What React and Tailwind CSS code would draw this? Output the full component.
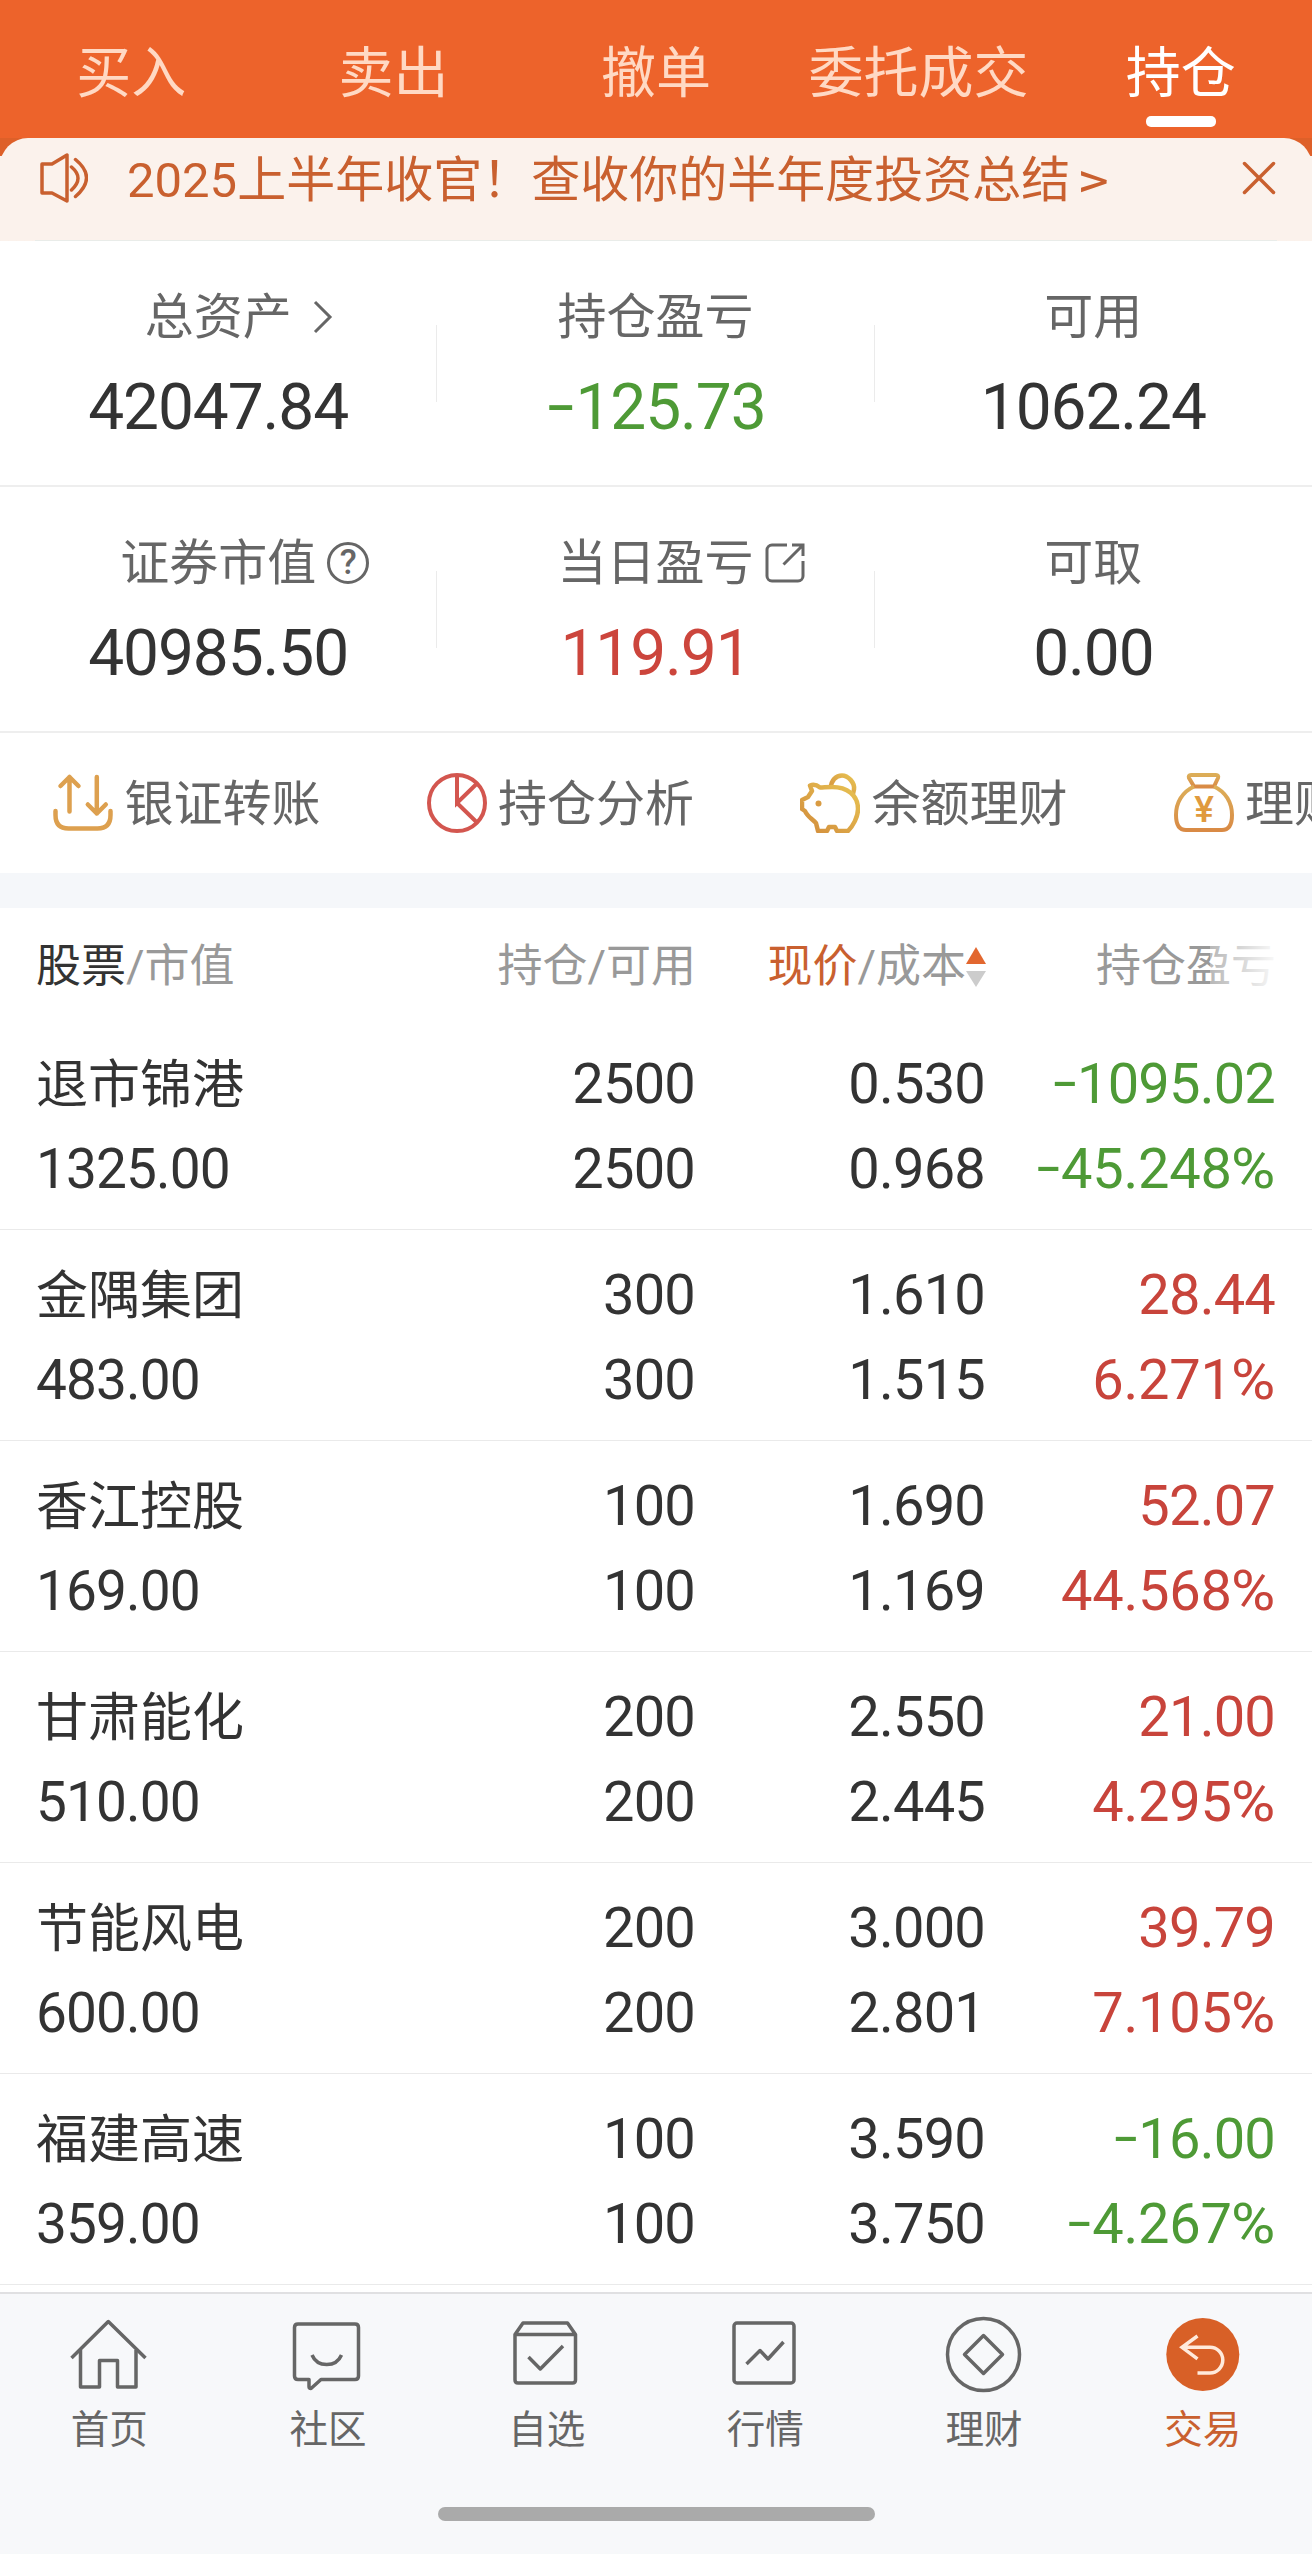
const tabs = ['买入', '卖出', '撤单', '委托成交', '持仓'];

const summary = [
  [
    { label: '总资产', value: '42047.84', icon: <ChevronIcon /> },
    { label: '持仓盈亏', value: '-125.73', tone: 'text-[#4e9a36]' },
    { label: '可用', value: '1062.24' },
  ],
  [
    { label: '证券市值', value: '40985.50', icon: <HelpIcon /> },
    { label: '当日盈亏', value: '119.91', tone: 'text-[#cc453c]', icon: <ExternalIcon /> },
    { label: '可取', value: '0.00' },
  ],
];

const holdings = [
  { name: '退市锦港', market: '1325.00', held: '2500', usable: '2500', price: '0.530', cost: '0.968', profit: '-1095.02', rate: '-45.248%' },
  { name: '金隅集团', market: '483.00', held: '300', usable: '300', price: '1.610', cost: '1.515', profit: '28.44', rate: '6.271%' },
  { name: '香江控股', market: '169.00', held: '100', usable: '100', price: '1.690', cost: '1.169', profit: '52.07', rate: '44.568%' },
  { name: '甘肃能化', market: '510.00', held: '200', usable: '200', price: '2.550', cost: '2.445', profit: '21.00', rate: '4.295%' },
  { name: '节能风电', market: '600.00', held: '200', usable: '200', price: '3.000', cost: '2.801', profit: '39.79', rate: '7.105%' },
  { name: '福建高速', market: '359.00', held: '100', usable: '100', price: '3.590', cost: '3.750', profit: '-16.00', rate: '-4.267%' },
];

const shortcuts = [
  { label: '银证转账', icon: <TransferIcon /> },
  { label: '持仓分析', icon: <PieIcon /> },
  { label: '余额理财', icon: <PiggyIcon /> },
  { label: '理财', icon: <MoneyBagIcon /> },
];

const navItems = [
  { label: '首页', icon: <HomeIcon /> },
  { label: '社区', icon: <ChatIcon /> },
  { label: '自选', icon: <PickIcon /> },
  { label: '行情', icon: <MarketIcon /> },
  { label: '理财', icon: <WealthIcon /> },
  { label: '交易', icon: <TradeIcon />, active: true },
];

export default function App() {
  return (
    <div className="flex h-[2554px] w-full flex-col overflow-hidden bg-white font-['Roboto','Noto_Sans_CJK_SC',sans-serif] text-[#333]">
      <TopTabs />
      <Notice />
      {summary.map((cells, i) => (
        <SummaryRow key={i} cells={cells} />
      ))}
      <Shortcuts />
      <div className="h-[35px] shrink-0 bg-[#f5f7fa]" />
      <TableHead />
      {holdings.map((h) => (
        <HoldingRow key={h.name} {...h} />
      ))}
      <BottomNav />
    </div>
  );
}

function TopTabs() {
  return (
    <nav className="grid h-[138px] shrink-0 grid-cols-5 bg-[#ed632b]">
      {tabs.map((tab) => {
        const active = tab === '持仓';
        return (
          <div
            key={tab}
            className={`flex flex-col items-center pt-[38px] text-[55px] leading-[70px] ${active ? 'text-white' : 'text-[#ffd9c4]'}`}
          >
            <span>{tab}</span>
            {active && <span className="mt-[8px] h-[11px] w-[70px] rounded-[5px] bg-white" />}
          </div>
        );
      })}
    </nav>
  );
}

function Notice() {
  return (
    <div className="h-[103px] shrink-0 bg-linear-to-b from-[#de6029] from-[18px] to-[#fbf2ec] to-[18px]">
      <div className="flex h-[102px] rounded-t-[28px] bg-[#fbf2ec] pt-[15px] pr-[36px] pl-[40px] text-[#c9602f]">
        <svg className="h-[50px] w-[48px]" viewBox="0 0 48 50" fill="none" stroke="currentColor" strokeWidth="3.500" strokeLinejoin="round" strokeLinecap="round">
          <path d="M2 11h10L27 2v46L12 40H2z" />
          <path d="M31.500 14q13 11 0 23M35.500 6.500q22 18 0 37" />
        </svg>
        <p className="mt-px ml-[39px] text-[49px] leading-[54px] whitespace-nowrap">
          2025上半年收官！查收你的半年度投资总结
          <span className="ml-[7px] inline-block origin-left scale-x-125">&gt;</span>
        </p>
        <svg className="mt-[8px] ml-auto h-[34px] w-[34px]" viewBox="0 0 34 34" stroke="currentColor" strokeWidth="3.500" strokeLinecap="round">
          <path d="M2.500 2.500l29 29M31.500 2.500l-29 29" />
        </svg>
      </div>
      <div className="mx-[35px] h-px bg-[#e9ece9]" />
    </div>
  );
}

// the sign and the percent mark take a wider cell than the font gives them
function Amount({ value }) {
  return (
    <>
      {value.startsWith('-') && (
        <span className="inline-block w-[0.47em] -translate-y-[0.03em] scale-x-150 text-center">-</span>
      )}
      {value.replace(/[-%]/g, '')}
      {value.endsWith('%') && (
        <span className="inline-block w-[0.77em] origin-right scale-x-108 text-right">%</span>
      )}
    </>
  );
}

function SummaryRow({ cells }) {
  return (
    <section className="grid h-[246px] shrink-0 grid-cols-3 border-b-2 border-[#eee]">
      {cells.map((cell, i) => (
        <div key={cell.label} className="flex">
          <div className="min-w-0 flex-1 pt-[38px]">
            <div className="grid h-[72px] grid-cols-[1fr_auto_1fr] items-center text-[49px] leading-[72px] text-[#666]">
              <span />
              <span className="pt-[3px]">{cell.label}</span>
              <span>{cell.icon}</span>
            </div>
            <div className={`mt-[17px] text-center text-[64px] leading-[80px] tracking-[-1.1px] ${cell.tone ?? ''}`}>
              <Amount value={cell.value} />
            </div>
          </div>
          {i < 2 && <div className="mt-[84px] h-[77px] w-px bg-[#ebebeb]" />}
        </div>
      ))}
    </section>
  );
}

function Shortcuts() {
  return (
    <section className="flex h-[140px] shrink-0 overflow-hidden pl-[53px]">
      {shortcuts.map((s) => (
        <div key={s.label} className="flex w-[373.500px] shrink-0 items-center gap-[11.500px] text-[49px] whitespace-nowrap text-[#666]">
          {s.icon}
          <span className="pt-[4px]">{s.label}</span>
        </div>
      ))}
    </section>
  );
}

function TableHead() {
  return (
    <div className="grid h-[111px] shrink-0 grid-cols-[360px_300px_290px_290px] px-[36px] pt-[27px] text-[45px] leading-[64px] whitespace-nowrap text-[#999]">
      <div>
        <span className="text-[#333]">股票</span>/市值
      </div>
      <div className="text-right">持仓/可用</div>
      <div className="flex h-[64px] items-center justify-end">
        <span>
          <span className="text-[#c9602f]">现价</span>/成本
        </span>
        <svg className="h-[40px] w-[20px]" viewBox="0 0 20 40">
          <path d="M10 0l10 17H0z" fill="#e2672f" />
          <path d="M0 24h20L10 40z" fill="#ccc" />
        </svg>
      </div>
      <div className="relative text-right">
        持仓盈亏
        <div className="absolute top-0 right-0 h-full w-[66px] bg-linear-to-r from-white/30 to-white/95" />
      </div>
    </div>
  );
}

function HoldingRow({ name, market, held, usable, price, cost, profit, rate }) {
  const tone = profit.startsWith('-') ? 'text-[#4e9a36]' : 'text-[#c8443b]';
  return (
    <div className="grid h-[211px] shrink-0 grid-cols-[360px_299px_290px_290px] border-b border-[#eaeaea] px-[36px] pt-[23px] text-right text-[56px] leading-[85px] tracking-[-0.8px] whitespace-nowrap">
      <div className="text-left">
        <div className="h-[85px] pt-px text-[52px] tracking-normal">{name}</div>
        <div className="text-[55px] tracking-[-0.9px]">{market}</div>
      </div>
      <div>
        <div>{held}</div>
        <div>{usable}</div>
      </div>
      <div>
        <div>{price}</div>
        <div>{cost}</div>
      </div>
      <div className={tone}>
        <div><Amount value={profit} /></div>
        <div className="tracking-[-0.2px]"><Amount value={rate} /></div>
      </div>
    </div>
  );
}

function BottomNav() {
  return (
    <footer className="mt-[7px] flex flex-1 flex-col items-center border-t-2 border-[#e0e0e2] bg-[#f7f8fa]">
      <div className="grid w-full grid-cols-6 pt-[21px]">
        {navItems.map((item, i) => (
          <div key={i} className={`flex flex-col items-center ${item.active ? 'text-[#c9602f]' : 'text-[#666]'}`}>
            {item.icon}
            <span className="mt-[9px] text-[38.500px] leading-[52px]">{item.label}</span>
          </div>
        ))}
      </div>
      <div className="mt-[51px] h-[14px] w-[437px] rounded-full bg-[#aaa]" />
    </footer>
  );
}

function ChevronIcon() {
  return (
    <svg className="ml-[21px] h-[34px] w-[20px]" viewBox="0 0 20 34" fill="none" stroke="currentColor" strokeWidth="3">
      <path d="M2 2l15 15L2 32" />
    </svg>
  );
}

function HelpIcon() {
  return (
    <span className="ml-[11px] flex h-[42px] w-[42px] items-center justify-center rounded-full border-[3.5px] border-[#666] text-[35px] leading-none font-medium">
      ?
    </span>
  );
}

function ExternalIcon() {
  return (
    <svg className="ml-[11px] h-[40px] w-[40px]" viewBox="0 0 40 40" fill="none" stroke="currentColor" strokeWidth="3">
      <path d="M22 2H7a5 5 0 0 0-5 5v26a5 5 0 0 0 5 5h26a5 5 0 0 0 5-5V18" />
      <path d="M27 2h11v11M38 2L18.500 21.500" />
    </svg>
  );
}

function TransferIcon() {
  return (
    <svg className="h-[60px] w-[60px]" viewBox="0 0 60 60" fill="none" stroke="#dda04f" strokeWidth="4.500" strokeLinecap="round" strokeLinejoin="round">
      <path d="M16.500 38.500V4M7.500 13l9-9 9 9" />
      <path d="M43.800 4v36.500M34.800 31.500l9 9 9-9" />
      <path d="M2.500 38v4q0 13.500 13 13.500h29q13 0 13-13.500v-4" />
    </svg>
  );
}

function PieIcon() {
  return (
    <svg className="h-[60px] w-[60px]" viewBox="0 0 60 60" fill="none" stroke="#d3564f" strokeWidth="4">
      <circle cx="30" cy="30" r="28" />
      <path d="M30 2v28l20-19.500M30 30l20 19.500" />
    </svg>
  );
}

function PiggyIcon() {
  return (
    <svg className="h-[60px] w-[60px]" viewBox="0 0 60 60" fill="none" stroke="url(#pig)" strokeWidth="4.500" strokeLinejoin="round">
      <defs>
        <linearGradient id="pig" x1="0" y1="1" x2="1" y2="0">
          <stop offset="0" stopColor="#d28c3c" />
          <stop offset="1" stopColor="#e8c352" />
        </linearGradient>
      </defs>
      <path d="M31 14.500c0-7 5-12 11-12s13 7 12 14q-.5 4-2 6" />
      <path d="M10 12.500q5-2 10 2c4 0 6-.5 12-.5 15 0 26 8 26 22 0 8-5 17-10 22H37l-2-4h-6l-2 4h-9l-2-8C11 45 7 43 5 38l-3-2v-9l6-3 4-6z" />
      <circle cx="18.500" cy="30.500" r="3" fill="#d99b42" stroke="none" />
    </svg>
  );
}

function MoneyBagIcon() {
  return (
    <svg className="h-[60px] w-[60px]" viewBox="0 0 60 60" fill="none" stroke="url(#bag)" strokeWidth="4" strokeLinejoin="round">
      <defs>
        <linearGradient id="bag" x1="0" y1="0" x2="0" y2="1">
          <stop offset="0" stopColor="#dcae58" />
          <stop offset="1" stopColor="#d98a45" />
        </linearGradient>
      </defs>
      <path d="M17 2h25q3 0 2 3l-4 8.500H20L15 5q-1-3 2-3z" />
      <path d="M20 13.500C8 19 2 30 2 42q0 15 10 15h36q10 0 10-15c0-12-6-23-18-28.500" />
      <text x="30" y="49" textAnchor="middle" fontSize="37" fontWeight="500" fill="#e09a3e" stroke="none">¥</text>
    </svg>
  );
}

function NavSvg({ children }) {
  return (
    <svg className="h-[80px] w-[80px]" viewBox="0 0 80 80" fill="none" stroke="currentColor" strokeWidth="3.500" strokeLinejoin="round">
      {children}
    </svg>
  );
}

function HomeIcon() {
  return (
    <NavSvg>
      <path d="M2.500 43L39.300 6.500 76.500 43" />
      <path d="M11.500 35v37h19V45.500h18V72h18.500V35" />
    </NavSvg>
  );
}

function ChatIcon() {
  return (
    <NavSvg>
      <path d="M10 9h57q3.500 0 3.500 3.500V61q0 3.500-3.500 3.500H33l-10 9q-2 0-2-2v-7H10Q6.500 64.500 6.500 61V12.500Q6.500 9 10 9z" />
      <path d="M24 40q4 9.500 14.700 9.500T53.500 40" />
    </NavSvg>
  );
}

function PickIcon() {
  return (
    <NavSvg>
      <path d="M8 19.500L16 8h44.500l8 11.500V65q0 3-3 3H11q-3 0-3-3zM8 19.500h60.500" />
      <path d="M21.500 42l11.800 12 22.700-23" />
    </NavSvg>
  );
}

function MarketIcon() {
  return (
    <NavSvg>
      <rect x="9" y="8" width="60" height="60" rx="3" />
      <path d="M21.500 49L35 35.500l8 8.500 15.500-17" />
    </NavSvg>
  );
}

function WealthIcon() {
  return (
    <NavSvg>
      <circle cx="39.500" cy="39.500" r="36" />
      <path d="M39.500 20.500l19 19-19 19-19-19z" />
    </NavSvg>
  );
}

function TradeIcon() {
  return (
    <NavSvg>
      <circle cx="39.800" cy="39.500" r="36.500" fill="#d86027" stroke="none" />
      <path d="M34.500 21L19 32.300l15.500 11.500M19 32.300h28a12.800 12.800 0 0 1 0 25.600H34.500" stroke="#ffeadb" strokeLinejoin="miter" />
    </NavSvg>
  );
}
